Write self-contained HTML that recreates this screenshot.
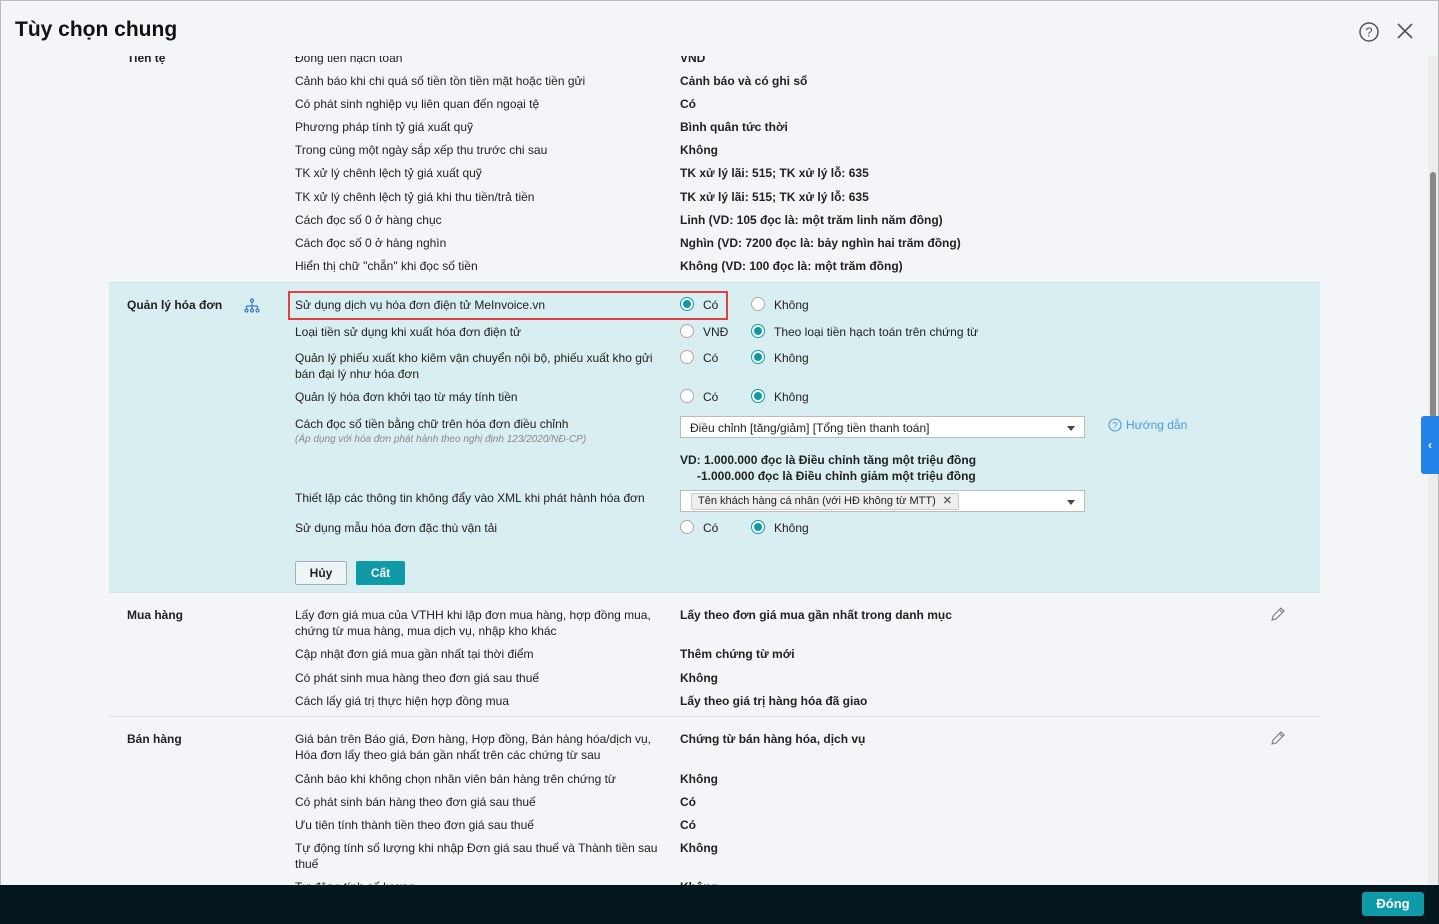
<!DOCTYPE html>
<html><head><meta charset="utf-8"><style>
*{margin:0;padding:0;box-sizing:border-box}
body{width:1439px;height:924px;overflow:hidden;background:#f3f5f9;font-family:"Liberation Sans","Noto Sans CJK SC",sans-serif;font-size:12px;color:#222;position:relative;box-shadow:inset 0 0 0 1px #bbb}
.a{position:absolute;white-space:nowrap;line-height:16px}
.b{font-weight:bold}
.hd{position:absolute;left:1px;top:1px;width:1437px;height:55px;background:#f3f5f9;z-index:5}
.ft{position:absolute;left:0;top:885px;width:1439px;height:39px;background:#03171c;z-index:5}
.r{position:absolute;width:14px;height:14px;border:1px solid #aaa;border-radius:50%;background:#fff}
.r.on{border-color:#0f9aa8}
.r.on::after{content:"";position:absolute;left:2px;top:2px;width:8px;height:8px;border-radius:50%;background:#0f9aa8}
.sel{position:absolute;background:#fff;border:1px solid #bbb;height:22px}
.car{position:absolute;right:9px;top:9px;border-left:4px solid transparent;border-right:4px solid transparent;border-top:5px solid #444}
.line{position:absolute;left:109px;width:1211px;height:1px;background:#dde1e6}
</style></head><body>
<div class="hd">
<div class="a b" style="left:14px;top:15px;font-size:21px;line-height:28px;color:#111">Tùy chọn chung</div>
<svg style="position:absolute;left:1357px;top:20px" width="22" height="22" viewBox="0 0 22 22"><circle cx="11" cy="11" r="9" fill="none" stroke="#555" stroke-width="1.5"/><text x="11" y="15.5" font-size="13" text-anchor="middle" fill="#555" font-family="Liberation Sans">?</text></svg>
<svg style="position:absolute;left:1395px;top:21px" width="18" height="18" viewBox="0 0 18 18"><path d="M2 2L16 16M16 2L2 16" stroke="#555" stroke-width="1.6"/></svg>
</div>
<div style="position:absolute;left:1428px;top:56px;width:10px;height:829px;background:#ececec"></div>
<div style="position:absolute;left:1430px;top:172px;width:6px;height:246px;background:#888;border-radius:3px"></div>
<div style="position:absolute;left:1421px;top:416px;width:18px;height:58px;background:#2383e9;border-radius:3px 0 0 3px;color:#fff;font-weight:bold;font-size:12px;line-height:58px;text-align:center;z-index:6">‹</div>

<div class="a b" style="left:127px;top:50px">Tiền tệ</div>
<div class="a" style="left:295px;top:50px">Đồng tiền hạch toán</div>
<div class="a b" style="left:680px;top:50px">VND</div>
<div class="a" style="left:295px;top:73px">Cảnh báo khi chi quá số tiền tồn tiền mặt hoặc tiền gửi</div><div class="a b" style="left:680px;top:73px">Cảnh báo và có ghi sổ</div>
<div class="a" style="left:295px;top:96px">Có phát sinh nghiệp vụ liên quan đến ngoại tệ</div><div class="a b" style="left:680px;top:96px">Có</div>
<div class="a" style="left:295px;top:119px">Phương pháp tính tỷ giá xuất quỹ</div><div class="a b" style="left:680px;top:119px">Bình quân tức thời</div>
<div class="a" style="left:295px;top:142px">Trong cùng một ngày sắp xếp thu trước chi sau</div><div class="a b" style="left:680px;top:142px">Không</div>
<div class="a" style="left:295px;top:165px">TK xử lý chênh lệch tỷ giá xuất quỹ</div><div class="a b" style="left:680px;top:165px">TK xử lý lãi: 515; TK xử lý lỗ: 635</div>
<div class="a" style="left:295px;top:189px">TK xử lý chênh lệch tỷ giá khi thu tiền/trả tiền</div><div class="a b" style="left:680px;top:189px">TK xử lý lãi: 515; TK xử lý lỗ: 635</div>
<div class="a" style="left:295px;top:212px">Cách đọc số 0 ở hàng chục</div><div class="a b" style="left:680px;top:212px">Linh (VD: 105 đọc là: một trăm linh năm đồng)</div>
<div class="a" style="left:295px;top:235px">Cách đọc số 0 ở hàng nghìn</div><div class="a b" style="left:680px;top:235px">Nghìn (VD: 7200 đọc là: bảy nghìn hai trăm đồng)</div>
<div class="a" style="left:295px;top:258px">Hiển thị chữ "chẵn" khi đọc số tiền</div><div class="a b" style="left:680px;top:258px">Không (VD: 100 đọc là: một trăm đồng)</div>

<div style="position:absolute;left:109px;top:282px;width:1211px;height:310px;background:#d9eef1;border-top:1px solid #cfe0e4"></div>
<div class="a b" style="left:127px;top:297px">Quản lý hóa đơn</div>
<svg style="position:absolute;left:244px;top:298px" width="16" height="16" viewBox="0 0 16 16" fill="none" stroke="#3a78c9" stroke-width="1.2"><circle cx="8" cy="2.5" r="1.5"/><path d="M8 4v4M2.5 8h11M2.5 8v3M8 8v3M13.5 8v3"/><circle cx="2.5" cy="12.5" r="1.5"/><circle cx="8" cy="12.5" r="1.5"/><circle cx="13.5" cy="12.5" r="1.5"/></svg>
<div style="position:absolute;left:288px;top:291px;width:440px;height:29px;border:2px solid #e0403f"></div>
<div class="a" style="left:295px;top:297px">Sử dụng dịch vụ hóa đơn điện tử MeInvoice.vn</div>
<div class="r on" style="left:680px;top:297px"></div><div class="a" style="left:703px;top:297px">Có</div>
<div class="r" style="left:751px;top:297px"></div><div class="a" style="left:774px;top:297px">Không</div>
<div class="a" style="left:295px;top:324px">Loại tiền sử dụng khi xuất hóa đơn điện tử</div>
<div class="r" style="left:680px;top:324px"></div><div class="a" style="left:703px;top:324px">VNĐ</div>
<div class="r on" style="left:751px;top:324px"></div><div class="a" style="left:774px;top:324px">Theo loại tiền hạch toán trên chứng từ</div>
<div class="a" style="left:295px;top:350px">Quản lý phiếu xuất kho kiêm vận chuyển nội bộ, phiếu xuất kho gửi<br>bán đại lý như hóa đơn</div>
<div class="r" style="left:680px;top:350px"></div><div class="a" style="left:703px;top:350px">Có</div>
<div class="r on" style="left:751px;top:350px"></div><div class="a" style="left:774px;top:350px">Không</div>
<div class="a" style="left:295px;top:389px">Quản lý hóa đơn khởi tạo từ máy tính tiền</div>
<div class="r" style="left:680px;top:389px"></div><div class="a" style="left:703px;top:389px">Có</div>
<div class="r on" style="left:751px;top:389px"></div><div class="a" style="left:774px;top:389px">Không</div>
<div class="a" style="left:295px;top:416px">Cách đọc số tiền bằng chữ trên hóa đơn điều chỉnh</div>
<div class="a" style="left:295px;top:432px;font-size:10px;font-style:italic;color:#888">(Áp dụng với hóa đơn phát hành theo nghị định 123/2020/NĐ-CP)</div>
<div class="sel" style="left:680px;top:416px;width:405px"><div class="a" style="left:9px;top:3px">Điều chỉnh [tăng/giảm] [Tổng tiền thanh toán]</div><div class="car"></div></div>
<svg style="position:absolute;left:1108px;top:418px" width="14" height="14" viewBox="0 0 14 14"><circle cx="7" cy="7" r="6" fill="none" stroke="#4a9be0" stroke-width="1.1"/><text x="7" y="10.5" font-size="9" text-anchor="middle" fill="#4a9be0" font-family="Liberation Sans">?</text></svg>
<div class="a" style="left:1126px;top:417px;color:#4a9be0">Hướng dẫn</div>
<div class="a b" style="left:680px;top:452px">VD: 1.000.000 đọc là Điều chỉnh tăng một triệu đồng</div>
<div class="a b" style="left:697px;top:468px">-1.000.000 đọc là Điều chỉnh giảm một triệu đồng</div>
<div class="a" style="left:295px;top:490px">Thiết lập các thông tin không đẩy vào XML khi phát hành hóa đơn</div>
<div class="sel" style="left:680px;top:490px;width:405px"><div style="position:absolute;left:10px;top:2px;height:17px;border:1px solid #ccc;background:#eee;border-radius:2px;padding:0 6px;font-size:11px;line-height:15px;white-space:nowrap">Tên khách hàng cá nhân (với HĐ không từ MTT) <b style="color:#666;margin-left:4px">✕</b></div><div class="car"></div></div>
<div class="a" style="left:295px;top:520px">Sử dụng mẫu hóa đơn đặc thù vận tải</div>
<div class="r" style="left:680px;top:520px"></div><div class="a" style="left:703px;top:520px">Có</div>
<div class="r on" style="left:751px;top:520px"></div><div class="a" style="left:774px;top:520px">Không</div>
<div style="position:absolute;left:295px;top:561px;width:52px;height:24px;border:1px solid #aab;border-radius:2px;background:#eef5f7;text-align:center;line-height:22px;font-weight:bold">Hủy</div>
<div style="position:absolute;left:356px;top:561px;width:49px;height:24px;border-radius:2px;background:#0f9aa8;color:#fff;text-align:center;line-height:24px;font-weight:bold">Cất</div>

<div class="line" style="top:592px"></div>
<div class="a b" style="left:127px;top:607px">Mua hàng</div>
<svg style="position:absolute;left:1270px;top:606px" width="16" height="16" viewBox="0 0 16 16" fill="none" stroke="#777" stroke-width="1.1"><path d="M2 14l1-4 8-8 3 3-8 8z M9.5 3.5l3 3"/></svg>
<div class="a" style="left:295px;top:607px">Lấy đơn giá mua của VTHH khi lập đơn mua hàng, hợp đồng mua,<br>chứng từ mua hàng, mua dịch vụ, nhập kho khác</div><div class="a b" style="left:680px;top:607px">Lấy theo đơn giá mua gần nhất trong danh mục</div>
<div class="a" style="left:295px;top:646px">Cập nhật đơn giá mua gần nhất tại thời điểm</div><div class="a b" style="left:680px;top:646px">Thêm chứng từ mới</div>
<div class="a" style="left:295px;top:670px">Có phát sinh mua hàng theo đơn giá sau thuế</div><div class="a b" style="left:680px;top:670px">Không</div>
<div class="a" style="left:295px;top:693px">Cách lấy giá trị thực hiện hợp đồng mua</div><div class="a b" style="left:680px;top:693px">Lấy theo giá trị hàng hóa đã giao</div>
<div class="line" style="top:716px"></div>
<div class="a b" style="left:127px;top:731px">Bán hàng</div>
<svg style="position:absolute;left:1270px;top:730px" width="16" height="16" viewBox="0 0 16 16" fill="none" stroke="#777" stroke-width="1.1"><path d="M2 14l1-4 8-8 3 3-8 8z M9.5 3.5l3 3"/></svg>
<div class="a" style="left:295px;top:731px">Giá bán trên Báo giá, Đơn hàng, Hợp đồng, Bán hàng hóa/dịch vụ,<br>Hóa đơn lấy theo giá bán gần nhất trên các chứng từ sau</div><div class="a b" style="left:680px;top:731px">Chứng từ bán hàng hóa, dịch vụ</div>
<div class="a" style="left:295px;top:771px">Cảnh báo khi không chọn nhân viên bán hàng trên chứng từ</div><div class="a b" style="left:680px;top:771px">Không</div>
<div class="a" style="left:295px;top:794px">Có phát sinh bán hàng theo đơn giá sau thuế</div><div class="a b" style="left:680px;top:794px">Có</div>
<div class="a" style="left:295px;top:817px">Ưu tiên tính thành tiền theo đơn giá sau thuế</div><div class="a b" style="left:680px;top:817px">Có</div>
<div class="a" style="left:295px;top:840px">Tự động tính số lượng khi nhập Đơn giá sau thuế và Thành tiền sau<br>thuế</div><div class="a b" style="left:680px;top:840px">Không</div>
<div class="a" style="left:295px;top:879px">Tự động tính số lượng</div><div class="a b" style="left:680px;top:879px">Không</div>

<div class="ft"><div style="position:absolute;left:1362px;top:7px;width:62px;height:24px;background:#0f9aa8;border-radius:3px;color:#fff;font-weight:bold;text-align:center;line-height:24px;font-size:13px">Đóng</div></div>
</body></html>
